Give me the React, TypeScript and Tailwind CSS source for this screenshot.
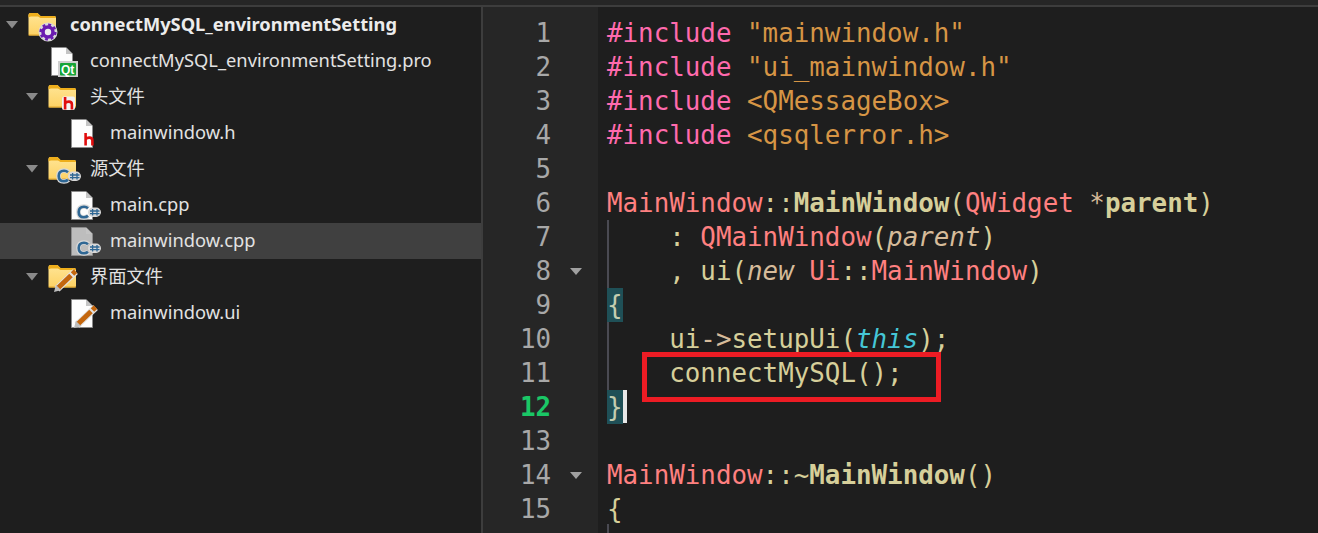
import React from "react";

const Folder = () => (
  <>
    <path d="M0.5 10V8Q0.5 6 2.5 6H9.5L12.5 9H26Q28 9 28 11V27Q28 28.5 26 28.5H2Q0.5 28.5 0.5 27Z" fill="url(#folderBody)" />
    <path d="M0.5 11V8Q0.5 6 2.5 6H9.5L12.5 9H26Q28 9 28 10.5V11H12.5L10 9.5H3Q0.5 9.5 0.5 11Z" fill="#eeae1b" />
    <path d="M0.5 28H28" stroke="#e3a72a" strokeWidth="1" />
  </>
);

const FileShape = ({ fill = "#fdfdfd" }: { fill?: string }) => (
  <g transform="translate(3 0)">
    <path d="M0.5 4.5H15L21.5 11V32.5H0.5Z" fill={fill} stroke="#8b8b8b" strokeWidth="1" />
    <path d="M15 4.5V11H21.5Z" fill="#c4c4c4" />
  </g>
);

const Gear = () => (
  <g>
    <circle cx="20" cy="25" r="9.5" fill="#d9d9d9" />
    <circle cx="20" cy="25" r="5" fill="#ececec" stroke="#6a1bb0" strokeWidth="3.6" />
    <circle cx="20" cy="25" r="7.4" fill="none" stroke="#6a1bb0" strokeWidth="2.4" strokeDasharray="2.9 2.9" />
  </g>
);

const HBadge = ({ x, y, halo }: { x: number; y: number; halo?: boolean }) => (
  <g transform={`translate(${x} ${y})`}>
    {halo && <rect x="-1.5" y="-0.5" width="13" height="13.5" rx="2" fill="#f2f2f2" />}
    <path d="M1.6 0V12.5M1.6 6.5Q2.6 4.6 5.5 4.6Q8.4 4.6 8.4 7.4V12.5" fill="none" stroke="#e00d0d" strokeWidth="2.6" />
  </g>
);

const CppBadge = ({ y }: { y: number }) => (
  <g transform={`translate(9 ${y})`}>
    <path d="M11.5 3.2Q9.6 1.5 7 1.5Q1.5 1.5 1.5 7Q1.5 12.5 7 12.5Q9.6 12.5 11.5 10.8" fill="none" stroke="#d8d8d8" strokeWidth="4.6" />
    <rect x="11" y="2.5" width="13" height="9.5" rx="4.7" fill="#d8d8d8" />
    <path d="M11 3.2Q9.4 1.7 7 1.7Q1.7 1.7 1.7 7Q1.7 12.3 7 12.3Q9.4 12.3 11 10.8" fill="none" stroke="#2f6794" strokeWidth="2.6" />
    <path d="M13 6H22.5M13 8.6H22.5M15.6 4V10.6M20 4V10.6" stroke="#2f6794" strokeWidth="1.3" />
  </g>
);

const Pencil = () => (
  <g>
    <line x1="9" y1="30" x2="27.5" y2="12.5" stroke="#e2e2e2" strokeWidth="7" />
    <polygon points="6,33 8,25.5 13.5,31" fill="#bdbdbd" />
    <line x1="10.5" y1="28.5" x2="23" y2="16.5" stroke="#c4660d" strokeWidth="5" />
    <line x1="24.5" y1="15" x2="27.5" y2="12.2" stroke="#c4660d" strokeWidth="5" />
  </g>
);

const icons: Record<string, React.ReactNode> = {
  project: (
    <>
      <Folder />
      <Gear />
    </>
  ),
  pro: (
    <>
      <FileShape />
      <rect x="10" y="18" width="20" height="16" fill="#cfcfcf" />
      <rect x="12" y="20" width="16" height="12.5" rx="1" fill="#17a538" />
      <text x="13" y="30.5" fontSize="12" fontWeight="700" fontFamily="'Liberation Sans', sans-serif" fill="#ffffff">Qt</text>
    </>
  ),
  hfolder: (
    <>
      <Folder />
      <HBadge x={15.5} y={18} halo />
    </>
  ),
  hfile: (
    <>
      <FileShape />
      <HBadge x={16} y={18} />
    </>
  ),
  cfolder: (
    <>
      <Folder />
      <CppBadge y={18} />
    </>
  ),
  cfile: (
    <>
      <FileShape />
      <CppBadge y={18} />
    </>
  ),
  cfilesel: (
    <>
      <FileShape fill="#bdbdbd" />
      <CppBadge y={18} />
    </>
  ),
  ufolder: (
    <>
      <Folder />
      <Pencil />
    </>
  ),
  ufile: (
    <>
      <FileShape />
      <Pencil />
    </>
  ),
};

type TreeItem = {
  label: string;
  icon: string;
  indent: string;
  arrow?: boolean;
  bold?: boolean;
  selected?: boolean;
};

const tree: TreeItem[] = [
  { label: "connectMySQL_environmentSetting", icon: "project", indent: "pl-0", arrow: true, bold: true },
  { label: "connectMySQL_environmentSetting.pro", icon: "pro", indent: "pl-5" },
  { label: "头文件", icon: "hfolder", indent: "pl-5", arrow: true },
  { label: "mainwindow.h", icon: "hfile", indent: "pl-10" },
  { label: "源文件", icon: "cfolder", indent: "pl-5", arrow: true },
  { label: "main.cpp", icon: "cfile", indent: "pl-10" },
  { label: "mainwindow.cpp", icon: "cfilesel", indent: "pl-10", selected: true },
  { label: "界面文件", icon: "ufolder", indent: "pl-5", arrow: true },
  { label: "mainwindow.ui", icon: "ufile", indent: "pl-10" },
];

const TreeRow = ({ item }: { item: TreeItem }) => (
  <div
    className={`flex h-9 items-center ${item.indent} ${item.selected ? "bg-[#404040]" : ""} ${
      item.bold ? "font-bold text-[#ececec]" : "text-[#e2e2e2]"
    }`}
  >
    <div className="flex w-7 shrink-0 justify-center pr-1">
      {item.arrow && (
        <svg width="12" height="8" viewBox="0 0 12 8">
          <path d="M0 0H12L6 7.5Z" fill="#8a8a8a" />
        </svg>
      )}
    </div>
    <svg width="42" height="36" viewBox="0 0 42 36" className="shrink-0">
      <defs>
        <linearGradient id="folderBody" x1="0" y1="0" x2="0" y2="1">
          <stop offset="0" stopColor="#ffe596" />
          <stop offset="1" stopColor="#fdd264" />
        </linearGradient>
      </defs>
      {icons[item.icon]}
    </svg>
    <span className="whitespace-nowrap pb-[2px]">{item.label}</span>
  </div>
);

const C = {
  pp: "text-[#ff6aad]",
  str: "text-[#d69545]",
  cls: "text-[#ff8080]",
  txt: "text-[#d6cf9a]",
  bold: "text-[#d6cf9a] font-bold",
  arg: "text-[#d6bb9a] italic",
  kw: "text-[#45c6d6] italic",
  op: "text-[#d6bb9a]",
};

type Seg = [string, string];
type Line = {
  segs?: Seg[];
  guide?: boolean;
  fold?: boolean;
  current?: boolean;
  brace?: string;
  cursor?: boolean;
  clipped?: boolean;
};

const lines: Line[] = [
  { segs: [["#include", C.pp], [" ", ""], ['"mainwindow.h"', C.str]] },
  { segs: [["#include", C.pp], [" ", ""], ['"ui_mainwindow.h"', C.str]] },
  { segs: [["#include", C.pp], [" ", ""], ["<QMessageBox>", C.str]] },
  { segs: [["#include", C.pp], [" ", ""], ["<qsqlerror.h>", C.str]] },
  {},
  {
    segs: [
      ["MainWindow", C.cls],
      ["::", C.txt],
      ["MainWindow", C.bold],
      ["(", C.txt],
      ["QWidget", C.cls],
      [" ", ""],
      ["*", C.op],
      ["parent", C.bold],
      [")", C.txt],
    ],
  },
  {
    guide: true,
    segs: [["    : ", C.txt], ["QMainWindow", C.cls], ["(", C.txt], ["parent", C.arg], [")", C.txt]],
  },
  {
    guide: true,
    fold: true,
    segs: [["    , ui(", C.txt], ["new", C.arg], [" ", ""], ["Ui", C.cls], ["::", C.txt], ["MainWindow", C.cls], [")", C.txt]],
  },
  { guide: true, brace: "{" },
  {
    guide: true,
    segs: [["    ui", C.txt], ["->", C.op], ["setupUi(", C.txt], ["this", C.kw], [");", C.txt]],
  },
  { guide: true, segs: [["    connectMySQL();", C.txt]] },
  { current: true, brace: "}", cursor: true },
  {},
  {
    fold: true,
    segs: [["MainWindow", C.cls], ["::~", C.txt], ["MainWindow", C.bold], ["()", C.txt]],
  },
  { segs: [["{", C.txt]] },
  { guide: true, clipped: true, segs: [["    delete", C.arg], [" ui;", C.txt]] },
];

const CodeRow = ({ line, n }: { line: Line; n: number }) => (
  <div className="flex h-[34px] leading-[34px]">
    <div className="flex w-[115px] shrink-0 items-center bg-[#262626]">
      <span className={`w-[68px] text-right ${line.current ? "font-bold text-[#1ac766]" : "text-[#a8a8a8]"}`}>
        {line.clipped ? "" : n}
      </span>
      <div className="flex flex-1 justify-end pr-[16px]">
        {line.fold && (
          <svg width="12" height="7" viewBox="0 0 12 7">
            <path d="M0 0H12L6 7Z" fill="#a0a0a0" />
          </svg>
        )}
      </div>
    </div>
    <div
      className={`ml-[9px] flex-1 whitespace-pre ${C.txt} ${line.guide ? "shadow-[inset_2px_0_0_#4a4a52]" : ""} ${
        line.clipped ? "-mt-[2px] pt-[3px]" : ""
      }`}
    >
      {line.brace && <span className="inline-block h-[34px] w-[16px] bg-[#1f5057] text-[#c4cdb0]">{line.brace}</span>}
      {line.cursor && <span className="inline-block h-[33px] w-[4px] bg-[#e8e8e8] align-top" />}
      {line.segs?.map(([t, c], i) => (
        <span key={i} className={c}>
          {t}
        </span>
      ))}
    </div>
  </div>
);

export default function App() {
  return (
    <div className="relative flex h-[533px] w-[1318px] flex-col overflow-hidden bg-[#1e1e1e]">
      <div className="h-[7px] shrink-0 border-b-2 border-[#3d3d3d] bg-[#262626]" />
      <div className="flex min-h-0 flex-1">
        <aside className="w-[481px] shrink-0 text-[18.3px] font-['Noto_Sans','Noto_Sans_CJK_SC',sans-serif]">
          {tree.map((item) => (
            <TreeRow key={item.label} item={item} />
          ))}
        </aside>
        <div className="w-[2px] shrink-0 bg-[#3d3d3d]" />
        <main className="min-w-0 flex-1 font-['DejaVu_Sans_Mono',monospace] text-[25.85px]">
          <div className="h-[9px] w-[115px] bg-[#262626]" />
          {lines.map((line, i) => (
            <CodeRow key={i} line={line} n={i + 1} />
          ))}
        </main>
      </div>
      <div className="absolute left-[642px] top-[352px] h-[50px] w-[299px] border-[5px] border-[#ed1c24]" />
    </div>
  );
}
